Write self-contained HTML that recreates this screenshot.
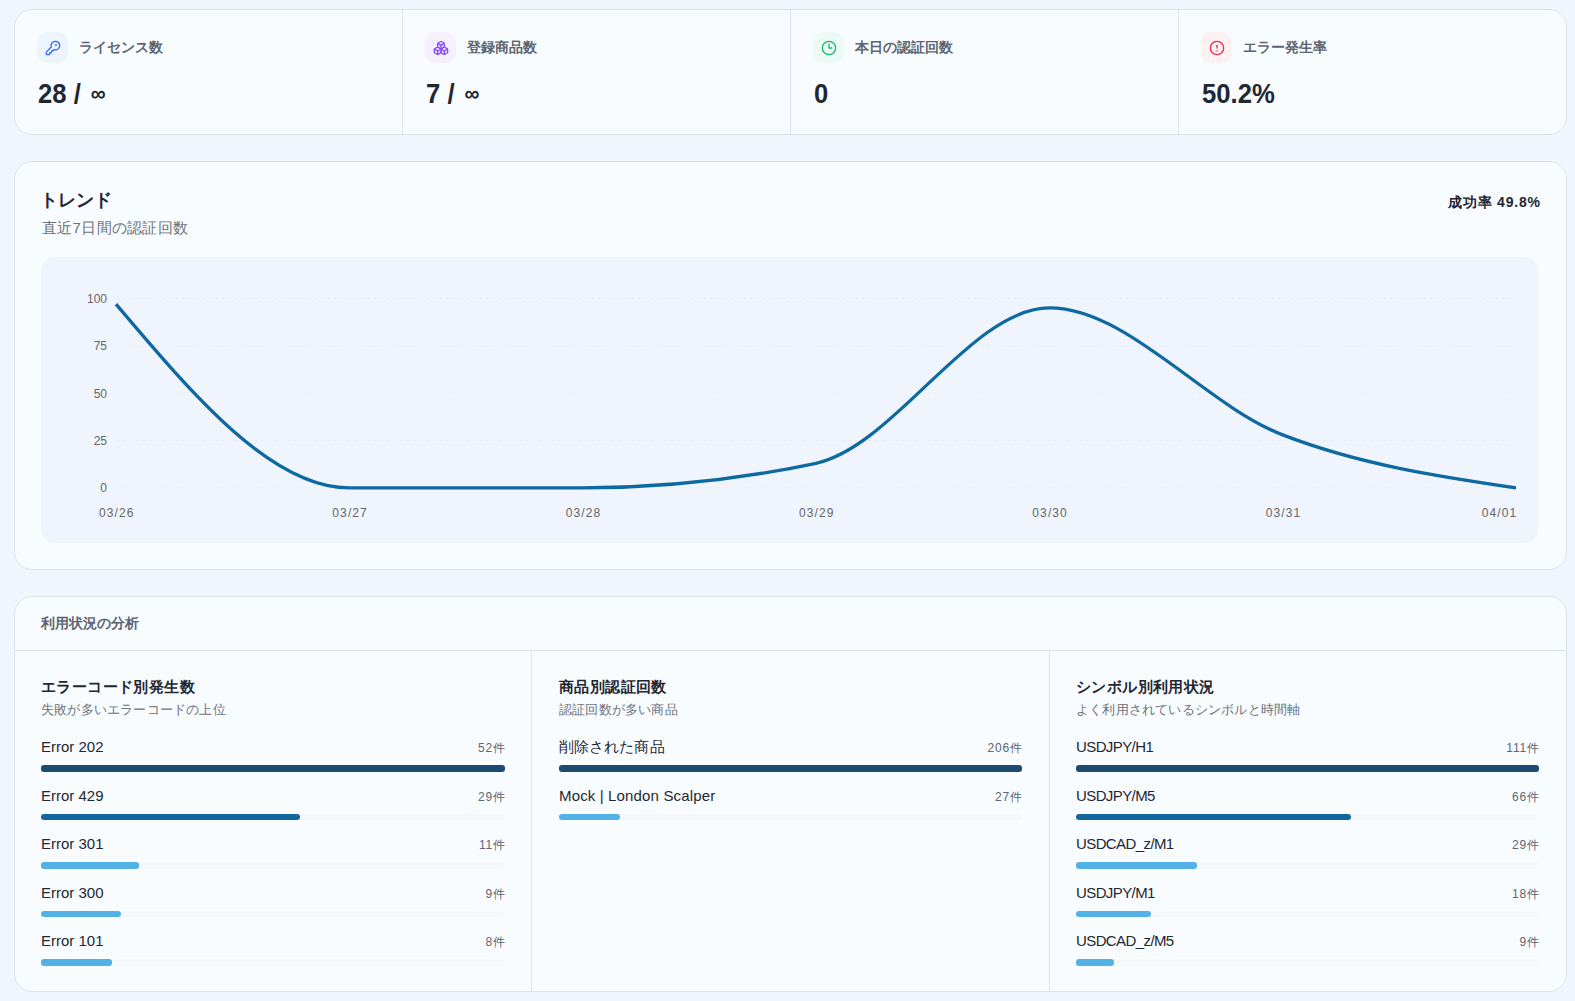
<!DOCTYPE html>
<html lang="ja"><head><meta charset="utf-8">
<style>
*{box-sizing:border-box;margin:0;padding:0}
html,body{width:1575px;height:1001px;overflow:hidden;background:#f1f5fd;font-family:"Liberation Sans",sans-serif;color:#1f2733}
.card{position:absolute;left:14px;width:1553px;background:#f9fcfe;border:1px solid #dde2ea;border-radius:18px;overflow:hidden}
.abs{position:absolute;white-space:nowrap}
.stat-div{position:absolute;top:0;bottom:0;width:1px;background:#dde2ea}
.ibox{position:absolute;top:22px;width:31px;height:31px;border-radius:10px;display:flex;align-items:center;justify-content:center}
.ibox svg{width:16px;height:16px;fill:none;stroke-width:2;stroke-linecap:round;stroke-linejoin:round}
.slabel{position:absolute;top:29px;font-size:14px;line-height:16px;font-weight:700;color:#5d6572}
.sval{position:absolute;top:69px;font-size:27px;line-height:30px;font-weight:700;color:#1f2733;transform:scaleX(0.95);transform-origin:0 0}
.ttl{font-size:15px;letter-spacing:0.4px;line-height:18px;font-weight:700;color:#1f2733}
.sub{font-size:13px;letter-spacing:0.2px;line-height:16px;color:#6b7280}
.row-l{font-size:14px;line-height:16px;letter-spacing:0.7px;color:#1f2733}
.row-c{font-size:12px;line-height:14px;letter-spacing:0.8px;color:#5d6572}
.track{position:absolute;height:6.5px;border-radius:3.25px;background:#f5f7fb}
.fill{position:absolute;left:0;top:0;bottom:0;border-radius:3px}
</style></head><body>

<!-- stat card -->
<div class="card" style="top:9px;height:126px">
  <div class="stat-div" style="left:387px"></div>
  <div class="stat-div" style="left:775px"></div>
  <div class="stat-div" style="left:1163px"></div>

  <div class="ibox" style="left:22px;background:#eef4ff">
    <svg viewBox="0 0 24 24" stroke="#2f6bf0"><path d="M2.586 17.414A2 2 0 0 0 2 18.828V21a1 1 0 0 0 1 1h3a1 1 0 0 0 1-1v-1a1 1 0 0 1 1-1h1a1 1 0 0 0 1-1v-1a1 1 0 0 1 1-1h.172a2 2 0 0 0 1.414-.586l.814-.814a6.5 6.5 0 1 0-4-4z"/><circle cx="16.5" cy="7.5" r=".5" fill="#2f6bf0"/></svg>
  </div>
  <div class="slabel" style="left:64px">ライセンス数</div>
  <div class="sval" style="left:23px">28 / <span style="font-size:22px;position:relative;top:-2px;margin-left:3px">∞</span></div>

  <div class="ibox" style="left:410px;background:#f5f0ff">
    <svg viewBox="0 0 24 24" stroke="#8a4cf5"><path d="M2.97 12.92A2 2 0 0 0 2 14.63v3.24a2 2 0 0 0 .97 1.71l3 1.8a2 2 0 0 0 2.06 0L12 19v-5.5l-5-3-4.03 2.42Z"/><path d="m7 16.5-4.74-2.85"/><path d="m7 16.5 5-3"/><path d="M7 16.5v5.17"/><path d="M12 13.5V19l3.970 2.38a2 2 0 0 0 2.06 0l3-1.8a2 2 0 0 0 .97-1.71v-3.24a2 2 0 0 0-.97-1.71L17 10.5l-5 3Z"/><path d="m17 16.5-5-3"/><path d="m17 16.5 4.74-2.85"/><path d="M17 16.5v5.17"/><path d="M7.97 4.42A2 2 0 0 0 7 6.13v4.37l5 3 5-3V6.13a2 2 0 0 0-.97-1.71l-3-1.8a2 2 0 0 0-2.06 0l-3 1.8Z"/><path d="M12 8 7.260 5.15"/><path d="m12 8 4.74-2.85"/><path d="M12 13.5V8"/></svg>
  </div>
  <div class="slabel" style="left:452px">登録商品数</div>
  <div class="sval" style="left:411px">7 / <span style="font-size:22px;position:relative;top:-2px;margin-left:3px">∞</span></div>

  <div class="ibox" style="left:798px;background:#ebfbf3">
    <svg viewBox="0 0 24 24" stroke="#1fb874"><circle cx="12" cy="12" r="10"/><polyline points="12 6 12 12 16 12"/></svg>
  </div>
  <div class="slabel" style="left:840px">本日の認証回数</div>
  <div class="sval" style="left:799px">0</div>

  <div class="ibox" style="left:1186px;background:#fff0f2">
    <svg viewBox="0 0 24 24" stroke="#ee2d5a"><circle cx="12" cy="12" r="10"/><line x1="12" x2="12" y1="8" y2="12"/><line x1="12" x2="12.01" y1="16" y2="16"/></svg>
  </div>
  <div class="slabel" style="left:1228px">エラー発生率</div>
  <div class="sval" style="left:1187px">50.2%</div>
</div>

<!-- trend card -->
<div class="card" style="top:161px;height:409px">
  <div class="abs" style="left:25px;top:28px;font-size:18px;line-height:20px;font-weight:700;color:#1f2733">トレンド</div>
  <div class="abs" style="left:27px;top:57px;font-size:15px;letter-spacing:0.3px;line-height:18px;color:#6b7280">直近7日間の認証回数</div>
  <div class="abs" style="right:26px;top:32px;font-size:14px;line-height:16px;font-weight:700;letter-spacing:0.8px;margin-right:-0.8px;color:#1f2733">成功率 49.8%</div>
  <div class="abs" style="left:26px;top:95px;width:1497px;height:286px;background:#f0f5fd;border-radius:14px"></div>
</div>
<svg style="position:absolute;left:0;top:0" width="1575" height="1001" viewBox="0 0 1575 1001">
  <g stroke="#e8ecf2" stroke-width="1" stroke-dasharray="3.3 3.3">
    <line x1="116" x2="1516" y1="298.5" y2="298.5"/>
    <line x1="116" x2="1516" y1="345.9" y2="345.9"/>
    <line x1="116" x2="1516" y1="393.2" y2="393.2"/>
    <line x1="116" x2="1516" y1="440.6" y2="440.6"/>
    <line x1="116" x2="1516" y1="487.9" y2="487.9"/>
  </g>
  <g font-family="Liberation Sans" font-size="12" fill="#666" text-anchor="end">
    <text x="107" y="302.5">100</text>
    <text x="107" y="350">75</text>
    <text x="107" y="397.5">50</text>
    <text x="107" y="445">25</text>
    <text x="107" y="492">0</text>
  </g>
  <g font-family="Liberation Sans" font-size="12" fill="#666" text-anchor="middle" letter-spacing="1.1">
    <text x="116.8" y="517">03/26</text>
    <text x="350.1" y="517">03/27</text>
    <text x="583.5" y="517">03/28</text>
    <text x="816.8" y="517">03/29</text>
    <text x="1050.1" y="517">03/30</text>
    <text x="1283.5" y="517">03/31</text>
    <text x="1517.3" y="517" text-anchor="end">04/01</text>
  </g>
  <path fill="none" stroke="#0e69a0" stroke-width="3.3" d="M116.00,304.18 C193.78,396.04 271.56,487.90 349.33,487.90 C427.11,487.90 504.89,487.90 582.67,487.90 C660.44,487.90 738.22,479.69 816.00,463.28 C893.78,446.86 971.56,307.97 1049.33,307.97 C1127.11,307.97 1204.89,404.88 1282.67,434.87 C1360.44,464.86 1438.22,476.38 1516.00,487.90"/>
</svg>

<!-- analysis card -->
<div class="card" style="top:596px;height:396px">
  <div class="abs" style="left:26px;top:17.5px;font-size:14px;line-height:16px;font-weight:700;color:#5d6572">利用状況の分析</div>
  <div style="position:absolute;left:0;right:0;top:53px;height:1px;background:#dde2ea"></div>
  <div style="position:absolute;left:516px;top:54px;bottom:0;width:1px;background:#dde2ea"></div>
  <div style="position:absolute;left:1034px;top:54px;bottom:0;width:1px;background:#dde2ea"></div>
<div class="abs ttl" style="left:26px;top:81px">エラーコード別発生数</div>
<div class="abs sub" style="left:26px;top:105px">失敗が多いエラーコードの上位</div>
<div class="abs row-l" style="left:26px;top:142.0px;font-size:15px;letter-spacing:0px;">Error 202</div>
<div class="abs row-c" style="left:26px;width:464.8px;text-align:right;top:144.0px">52件</div>
<div class="track" style="left:26px;width:464px;top:168.0px"><div class="fill" style="width:464.0px;background:#1c4a70"></div></div>
<div class="abs row-l" style="left:26px;top:190.5px;font-size:15px;letter-spacing:0px;">Error 429</div>
<div class="abs row-c" style="left:26px;width:464.8px;text-align:right;top:192.5px">29件</div>
<div class="track" style="left:26px;width:464px;top:216.5px"><div class="fill" style="width:258.8px;background:#12679d"></div></div>
<div class="abs row-l" style="left:26px;top:239.0px;font-size:15px;letter-spacing:0px;">Error 301</div>
<div class="abs row-c" style="left:26px;width:464.8px;text-align:right;top:241.0px">11件</div>
<div class="track" style="left:26px;width:464px;top:265.0px"><div class="fill" style="width:98.2px;background:#52b1e5"></div></div>
<div class="abs row-l" style="left:26px;top:287.5px;font-size:15px;letter-spacing:0px;">Error 300</div>
<div class="abs row-c" style="left:26px;width:464.8px;text-align:right;top:289.5px">9件</div>
<div class="track" style="left:26px;width:464px;top:313.5px"><div class="fill" style="width:80.3px;background:#52b1e5"></div></div>
<div class="abs row-l" style="left:26px;top:336.0px;font-size:15px;letter-spacing:0px;">Error 101</div>
<div class="abs row-c" style="left:26px;width:464.8px;text-align:right;top:338.0px">8件</div>
<div class="track" style="left:26px;width:464px;top:362.0px"><div class="fill" style="width:71.4px;background:#52b1e5"></div></div>
<div class="abs ttl" style="left:544px;top:81px">商品別認証回数</div>
<div class="abs sub" style="left:544px;top:105px">認証回数が多い商品</div>
<div class="abs row-l" style="left:544px;top:142.0px;font-size:15px;letter-spacing:0.1px;">削除された商品</div>
<div class="abs row-c" style="left:544px;width:463.8px;text-align:right;top:144.0px">206件</div>
<div class="track" style="left:544px;width:463px;top:168.0px"><div class="fill" style="width:463.0px;background:#1c4a70"></div></div>
<div class="abs row-l" style="left:544px;top:190.5px;font-size:15px;letter-spacing:0.15px;">Mock | London Scalper</div>
<div class="abs row-c" style="left:544px;width:463.8px;text-align:right;top:192.5px">27件</div>
<div class="track" style="left:544px;width:463px;top:216.5px"><div class="fill" style="width:60.7px;background:#52b1e5"></div></div>
<div class="abs ttl" style="left:1061px;top:81px">シンボル別利用状況</div>
<div class="abs sub" style="left:1061px;top:105px">よく利用されているシンボルと時間軸</div>
<div class="abs row-l" style="left:1061px;top:142.0px;font-size:15px;letter-spacing:-0.6px;">USDJPY/H1</div>
<div class="abs row-c" style="left:1061px;width:463.8px;text-align:right;top:144.0px">111件</div>
<div class="track" style="left:1061px;width:463px;top:168.0px"><div class="fill" style="width:463.0px;background:#1c4a70"></div></div>
<div class="abs row-l" style="left:1061px;top:190.5px;font-size:15px;letter-spacing:-0.6px;">USDJPY/M5</div>
<div class="abs row-c" style="left:1061px;width:463.8px;text-align:right;top:192.5px">66件</div>
<div class="track" style="left:1061px;width:463px;top:216.5px"><div class="fill" style="width:275.3px;background:#12679d"></div></div>
<div class="abs row-l" style="left:1061px;top:239.0px;font-size:15px;letter-spacing:-0.6px;">USDCAD_z/M1</div>
<div class="abs row-c" style="left:1061px;width:463.8px;text-align:right;top:241.0px">29件</div>
<div class="track" style="left:1061px;width:463px;top:265.0px"><div class="fill" style="width:121.0px;background:#52b1e5"></div></div>
<div class="abs row-l" style="left:1061px;top:287.5px;font-size:15px;letter-spacing:-0.6px;">USDJPY/M1</div>
<div class="abs row-c" style="left:1061px;width:463.8px;text-align:right;top:289.5px">18件</div>
<div class="track" style="left:1061px;width:463px;top:313.5px"><div class="fill" style="width:75.1px;background:#52b1e5"></div></div>
<div class="abs row-l" style="left:1061px;top:336.0px;font-size:15px;letter-spacing:-0.6px;">USDCAD_z/M5</div>
<div class="abs row-c" style="left:1061px;width:463.8px;text-align:right;top:338.0px">9件</div>
<div class="track" style="left:1061px;width:463px;top:362.0px"><div class="fill" style="width:37.5px;background:#52b1e5"></div></div>

</div>
</body></html>
